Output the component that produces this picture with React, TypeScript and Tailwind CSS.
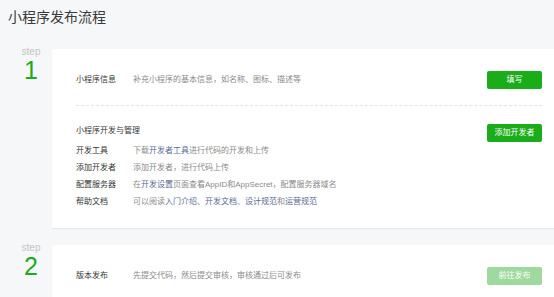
const font = "font-['Liberation_Sans','Noto_Sans_CJK_SC',sans-serif]";

function GreenButton({ label, disabled }: { label: string; disabled?: boolean }) {
  return (
    <button
      className={
        "w-[55px] h-[18px] rounded-[2px] text-[8px] leading-none text-white " +
        (disabled ? "bg-[#9ed99d] text-[#dff3df]" : "bg-[#1aad19]")
      }
    >
      {label}
    </button>
  );
}

function Step({ n, children }: { n: number; children: React.ReactNode }) {
  return (
    <div className="flex">
      <div className="w-[52px] shrink-0 pl-[10px] -mt-[3px] flex flex-col items-center">
        <span className="text-[10px] leading-[12px] text-[#c4c4c4]">step</span>
        <span className="text-[25px] leading-[24px] text-[#1aad19]">{n}</span>
      </div>
      <div className="flex-1 bg-white shadow-[0_1px_1px_rgba(0,0,0,0.06)] pl-[24px] pr-[12px]">
        {children}
      </div>
    </div>
  );
}

const link = "text-[#576b95]";

export default function App() {
  return (
    <div className={"w-[554px] h-[297px] overflow-hidden bg-[#f6f7f9] " + font}>
      <h1 className="pl-[8px] pt-[7px] text-[14px] leading-[20px] text-[#3a3a3a]">小程序发布流程</h1>

      <div className="mt-[22px]">
        <Step n={1}>
          <div className="pt-[22px] pb-[16px] border-b border-dashed border-[#e4e4e4] flex items-center justify-between">
            <div className="flex text-[8px] leading-[12px]">
              <span className="w-[57px] text-[#353535]">小程序信息</span>
              <span className="text-[#8a8a8a]">补充小程序的基本信息，如名称、图标、描述等</span>
            </div>
            <GreenButton label="填写" />
          </div>

          <div className="pt-[18px] pb-[18px]">
            <div className="flex items-start justify-between">
              <span className="mt-[1px] text-[8px] leading-[12px] text-[#353535]">小程序开发与管理</span>
              <GreenButton label="添加开发者" />
            </div>
            <div className="text-[8px] leading-[17px]">
              <div className="flex">
                <span className="w-[57px] text-[#353535]">开发工具</span>
                <span className="text-[#8a8a8a]">
                  下载<span className={link}>开发者工具</span>进行代码的开发和上传
                </span>
              </div>
              <div className="flex">
                <span className="w-[57px] text-[#353535]">添加开发者</span>
                <span className="text-[#8a8a8a]">添加开发者，进行代码上传</span>
              </div>
              <div className="flex">
                <span className="w-[57px] text-[#353535]">配置服务器</span>
                <span className="text-[#8a8a8a]">
                  在<span className={link}>开发设置</span>页面查看AppID和AppSecret，配置服务器域名
                </span>
              </div>
              <div className="flex">
                <span className="w-[57px] text-[#353535]">帮助文档</span>
                <span className="text-[#8a8a8a]">
                  可以阅读<span className={link}>入门介绍</span>、<span className={link}>开发文档</span>、
                  <span className={link}>设计规范</span>和<span className={link}>运营规范</span>
                </span>
              </div>
            </div>
          </div>
        </Step>
      </div>

      <div className="mt-[17px]">
        <Step n={2}>
          <div className="pt-[22px] pb-[22px] flex items-center justify-between">
            <div className="flex text-[8px] leading-[12px]">
              <span className="w-[57px] text-[#353535]">版本发布</span>
              <span className="text-[#8a8a8a]">先提交代码，然后提交审核，审核通过后可发布</span>
            </div>
            <GreenButton label="前往发布" disabled />
          </div>
        </Step>
      </div>
    </div>
  );
}
